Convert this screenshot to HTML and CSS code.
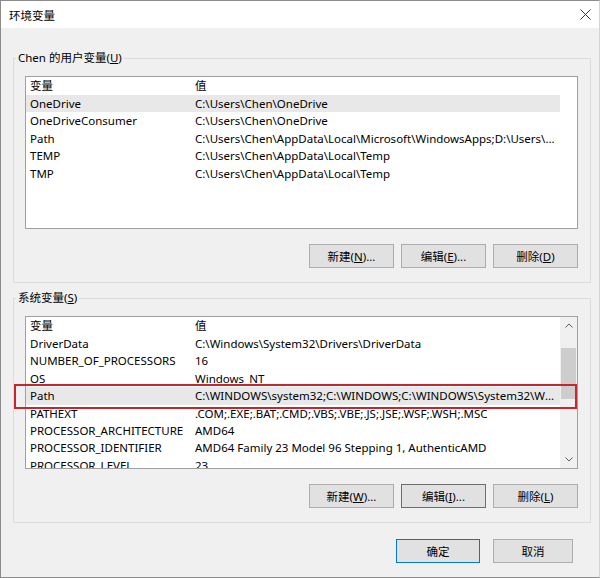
FILE: index.html
```html
<!DOCTYPE html>
<html lang="zh-CN">
<head>
    <meta charset="UTF-8">
    <title>环境变量</title>
    <link rel="stylesheet" href="styles.css">
</head>
<body>
    <div class="window">
        <div class="titlebar">
            <span class="title">环境变量</span>
            <svg class="close" width="11" height="11" viewBox="0 0 11 11">
                <path d="M0.5 0.5 L10.5 10.5 M10.5 0.5 L0.5 10.5" stroke="#333" stroke-width="1" fill="none"/>
            </svg>
        </div>
        <div class="content">
            <fieldset class="group">
                <legend>Chen 的用户变量(<u>U</u>)</legend>
                <div class="list">
                    <div class="rows">
                        <div class="row head"><span class="name">变量</span><span class="value">值</span></div>
                        <div class="row selected"><span class="name">OneDrive</span><span class="value">C:\Users\Chen\OneDrive</span></div>
                        <div class="row"><span class="name">OneDriveConsumer</span><span class="value">C:\Users\Chen\OneDrive</span></div>
                        <div class="row"><span class="name">Path</span><span class="value">C:\Users\Chen\AppData\Local\Microsoft\WindowsApps;D:\Users\Chen\AppData\Local\Programs</span></div>
                        <div class="row"><span class="name">TEMP</span><span class="value">C:\Users\Chen\AppData\Local\Temp</span></div>
                        <div class="row"><span class="name">TMP</span><span class="value">C:\Users\Chen\AppData\Local\Temp</span></div>
                    </div>
                </div>
                <div class="actions">
                    <button class="btn">新建(<u>N</u>)...</button>
                    <button class="btn">编辑(<u>E</u>)...</button>
                    <button class="btn">删除(<u>D</u>)</button>
                </div>
            </fieldset>

            <fieldset class="group system">
                <legend>系统变量(<u>S</u>)</legend>
                <div class="list">
                    <div class="rows">
                        <div class="row head"><span class="name">变量</span><span class="value">值</span></div>
                        <div class="row"><span class="name">DriverData</span><span class="value">C:\Windows\System32\Drivers\DriverData</span></div>
                        <div class="row"><span class="name">NUMBER_OF_PROCESSORS</span><span class="value">16</span></div>
                        <div class="row"><span class="name">OS</span><span class="value">Windows_NT</span></div>
                        <div class="row selected"><span class="name">Path</span><span class="value">C:\WINDOWS\system32;C:\WINDOWS;C:\WINDOWS\System32\Wbem;C:\WINDOWS\System32\WindowsPowerShell</span></div>
                        <div class="row"><span class="name">PATHEXT</span><span class="value">.COM;.EXE;.BAT;.CMD;.VBS;.VBE;.JS;.JSE;.WSF;.WSH;.MSC</span></div>
                        <div class="row"><span class="name">PROCESSOR_ARCHITECTURE</span><span class="value">AMD64</span></div>
                        <div class="row"><span class="name">PROCESSOR_IDENTIFIER</span><span class="value">AMD64 Family 23 Model 96 Stepping 1, AuthenticAMD</span></div>
                        <div class="row"><span class="name">PROCESSOR_LEVEL</span><span class="value">23</span></div>
                        <div class="row"><span class="name">PROCESSOR_REVISION</span><span class="value">6001</span></div>
                    </div>
                    <div class="scrollbar">
                        <div class="sb-btn">
                            <svg width="8" height="5" viewBox="0 0 8 5"><path d="M0.5 4.5 L4 1 L7.5 4.5" stroke="#606060" fill="none"/></svg>
                        </div>
                        <div class="sb-track"><div class="sb-thumb"></div></div>
                        <div class="sb-btn">
                            <svg width="8" height="5" viewBox="0 0 8 5"><path d="M0.5 0.5 L4 4 L7.5 0.5" stroke="#606060" fill="none"/></svg>
                        </div>
                    </div>
                    <!-- red marker round the Path row -->
                    <div class="marker"></div>
                </div>
                <div class="actions">
                    <button class="btn">新建(<u>W</u>)...</button>
                    <button class="btn focused">编辑(<u>I</u>)...</button>
                    <button class="btn">删除(<u>L</u>)</button>
                </div>
            </fieldset>

            <div class="dialog-actions">
                <button class="btn default ok">确定</button>
                <button class="btn cancel">取消</button>
            </div>
        </div>
    </div>
</body>
</html>
```

FILE: styles.css
```css
* {
    box-sizing: border-box;
}

body {
    margin: 0;
    font-family: "Noto Sans", "Noto Sans CJK SC", sans-serif;
    font-size: 11.5px;
    color: #000;
    background: #fff;
}

.window {
    width: 600px;
    height: 578px;
    display: flex;
    flex-direction: column;
    border: 1px solid #8c8c8c;
    border-right-color: #d4d4d4;
    background: #f0f0f0;
}

.titlebar {
    flex: none;
    height: 27px;
    display: flex;
    align-items: center;
    justify-content: space-between;
    padding: 0 8px 0 8px;
    background: #fff;
}

.title {
    font-size: 11.5px;
}

.content {
    flex: 1;
    padding: 22px 8px 0 12px;
}

.group {
    margin: 0;
    padding: 10px 12px 14px 11px;
    border: 1px solid #dcdcdc;
    min-width: 0;
}

.group.system {
    margin-top: 7px;
}

.group legend {
    margin-left: -9px;
    padding: 0 2px;
    line-height: 16px;
}

.list {
    position: relative;
    display: flex;
    height: 153px;
    border: 1px solid #a0a0a0;
    background: #fff;
}

.rows {
    width: 534px;
    overflow: hidden;
}

.row {
    display: flex;
    height: 17.4px;
    line-height: 17.4px;
    white-space: nowrap;
}

.row.head {
    height: 18px;
    line-height: 18px;
}

.row.selected {
    background: #e8e8e8;
}

.name {
    flex: none;
    width: 164px;
    padding-left: 4px;
    overflow: hidden;
}

.value {
    flex: 1;
    min-width: 0;
    padding-left: 5px;
    overflow: hidden;
    text-overflow: ellipsis;
}

.scrollbar {
    flex: 1;
    display: flex;
    flex-direction: column;
    background: #f0f0f0;
}

.sb-btn {
    height: 17px;
    display: flex;
    align-items: center;
    justify-content: center;
}

.sb-track {
    flex: 1;
    padding: 14px 1px 0;
}

.sb-thumb {
    height: 51px;
    background: #cdcdcd;
}

.marker {
    position: absolute;
    left: -12px;
    top: 67px;
    width: 563px;
    height: 25px;
    border: 2px solid #c8262f;
    pointer-events: none;
}

.actions {
    display: flex;
    justify-content: flex-end;
    gap: 7px;
    margin-top: 15px;
}

.btn {
    width: 85px;
    height: 24px;
    padding: 0;
    font: inherit;
    color: #000;
    background: #e1e1e1;
    border: 1px solid #adadad;
}

.btn.focused {
    border-color: #6e6e6e;
}

.btn.default {
    border-color: #0078d7;
}

.dialog-actions {
    display: flex;
    justify-content: flex-end;
    gap: 13px;
    margin-top: 16px;
    padding-right: 18px;
}

.btn.ok {
    width: 84px;
}

.btn.cancel {
    width: 80px;
}
```
